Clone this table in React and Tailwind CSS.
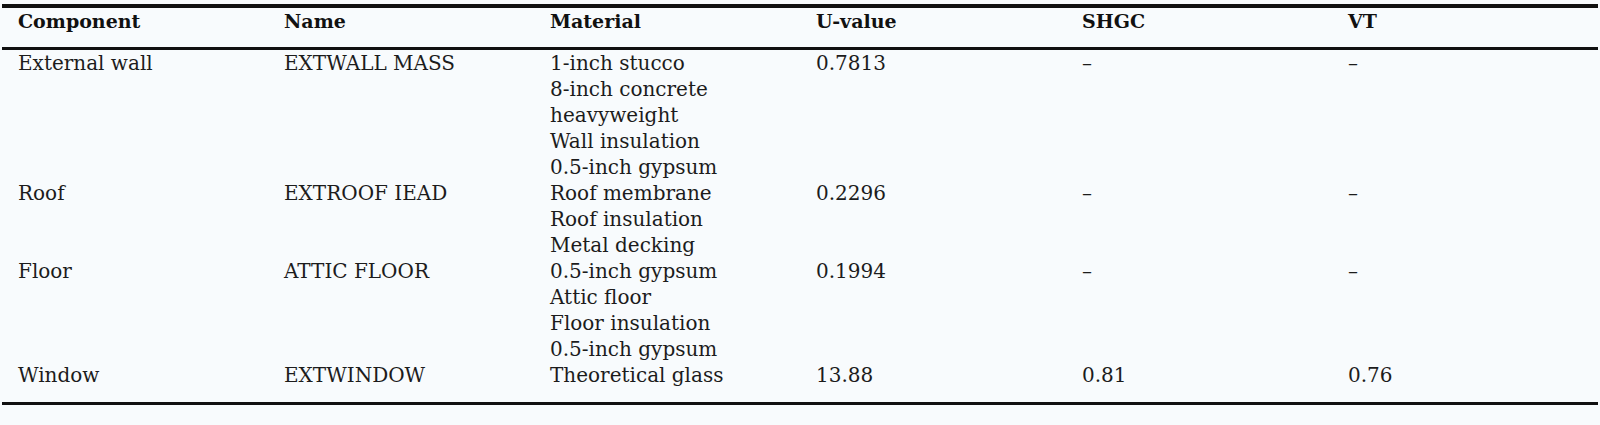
import React from 'react';

const columns = ['Component', 'Name', 'Material', 'U-value', 'SHGC', 'VT'];

const rows = [
  {
    component: 'External wall',
    name: 'EXTWALL MASS',
    material: ['1-inch stucco', '8-inch concrete heavyweight', 'Wall insulation', '0.5-inch gypsum'],
    u: '0.7813',
    shgc: '–',
    vt: '–',
  },
  {
    component: 'Roof',
    name: 'EXTROOF IEAD',
    material: ['Roof membrane', 'Roof insulation', 'Metal decking'],
    u: '0.2296',
    shgc: '–',
    vt: '–',
  },
  {
    component: 'Floor',
    name: 'ATTIC FLOOR',
    material: ['0.5-inch gypsum', 'Attic floor', 'Floor insulation', '0.5-inch gypsum'],
    u: '0.1994',
    shgc: '–',
    vt: '–',
  },
  {
    component: 'Window',
    name: 'EXTWINDOW',
    material: ['Theoretical glass'],
    u: '13.88',
    shgc: '0.81',
    vt: '0.76',
  },
];

export default function App() {
  return (
    <div className="w-[1600px] h-[425px] bg-[#f8fbfd] pt-1 px-[2px] font-['DejaVu_Serif',serif] text-[#1c1c1c]">
      <div className="border-t-4 border-b-[3px] border-[#111]">
        <table className="w-full table-fixed border-separate border-spacing-0">
          <thead>
            <tr>
              {columns.map((col) => (
                <th
                  key={col}
                  className="text-left align-top pl-4 pb-[13px] border-b-[3px] border-[#111] text-[19px] leading-[26px] font-bold text-[#111]"
                >
                  {col}
                </th>
              ))}
            </tr>
          </thead>
          <tbody className="text-[20px] leading-[26px]">
            {rows.map((row, i) => {
              const last = i === rows.length - 1;
              const cell = last ? 'pl-4 align-top pb-[14px]' : 'pl-4 align-top';
              return (
                <tr key={row.component}>
                  <td className={cell}>{row.component}</td>
                  <td className={cell}>{row.name}</td>
                  <td className={cell}>
                    {row.material.map((m, j) => (
                      <div key={j}>{m}</div>
                    ))}
                  </td>
                  <td className={cell}>{row.u}</td>
                  <td className={cell}>{row.shgc}</td>
                  <td className={cell}>{row.vt}</td>
                </tr>
              );
            })}
          </tbody>
        </table>
      </div>
    </div>
  );
}
